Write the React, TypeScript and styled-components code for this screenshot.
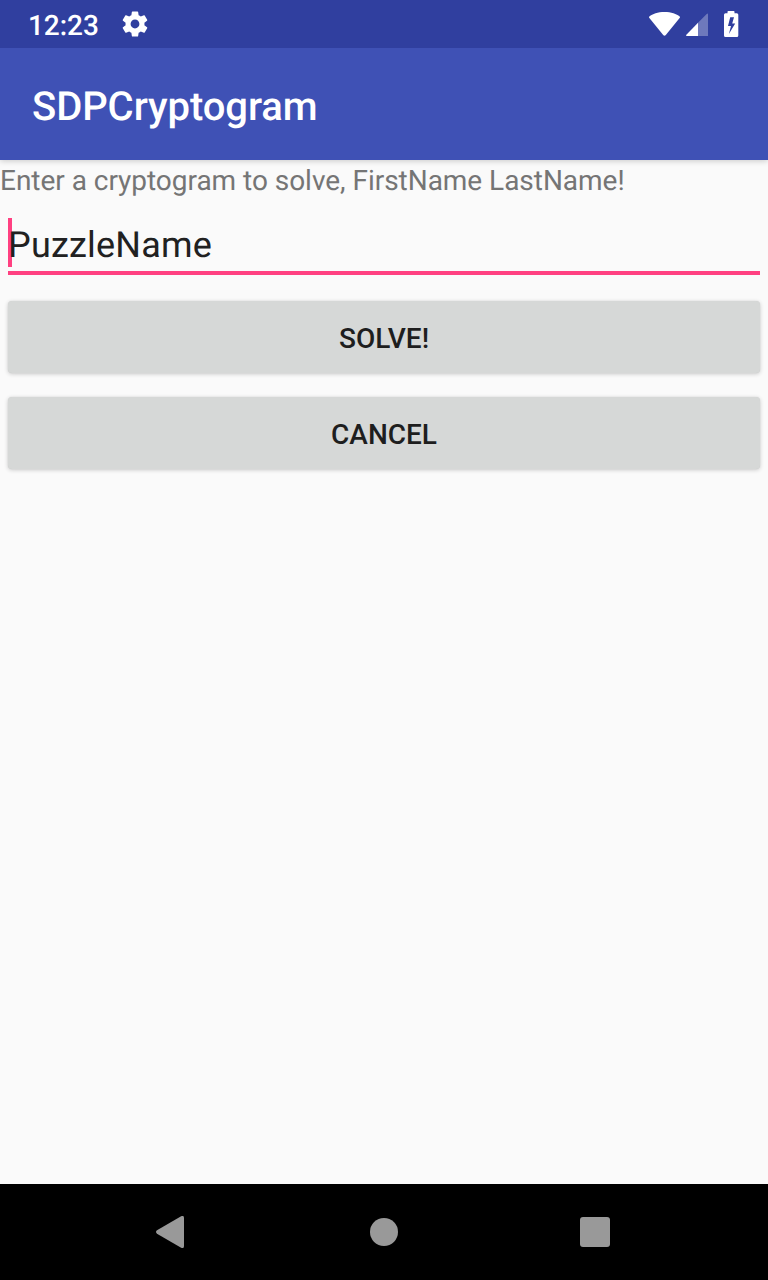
import React from "react";
import styled, { createGlobalStyle } from "styled-components";

const GlobalStyle = createGlobalStyle`
  * { box-sizing: border-box; }
  body {
    margin: 0;
    background: #fafafa;
    font-family: Roboto, sans-serif;
    text-rendering: geometricPrecision;
    -webkit-font-smoothing: antialiased;
  }
`;

const Screen = styled.div`
  display: flex;
  flex-direction: column;
  width: 768px;
  height: 1280px;
  overflow: hidden;
  background: #fafafa;
`;

const StatusBar = styled.header`
  display: flex;
  align-items: center;
  flex: none;
  z-index: 2;
  height: 48px;
  padding: 0 28px;
  background: #303f9f;
  color: #fff;
`;

const Clock = styled.span`
  width: 94px;
  padding-top: 4px;
  font-size: 28px;
  line-height: 34px;
  font-weight: 500;
  letter-spacing: -0.05px;
`;

const StatusIcons = styled.div`
  display: flex;
  margin-left: auto;
`;

const Icon = styled.svg`
  display: block;
  flex: none;
`;

const AppBar = styled.div`
  display: flex;
  align-items: center;
  flex: none;
  height: 112px;
  padding: 6px 32px 0;
  background: #3f51b5;
  box-shadow: 0 1px 6px rgba(0, 0, 0, 0.2);
  z-index: 1;
`;

const Title = styled.h1`
  margin: 0;
  color: #fff;
  font-size: 40px;
  line-height: 48px;
  font-weight: 500;
  letter-spacing: -0.08px;
`;

const Content = styled.main`
  display: flex;
  flex-direction: column;
  flex: 1;
`;

const Prompt = styled.p`
  margin: 0;
  height: 58px;
  padding-top: 2px;
  color: #757575;
  font-size: 28px;
  line-height: 38px;
  letter-spacing: -0.03px;
  white-space: nowrap;
`;

const Field = styled.div`
  position: relative;
  height: 57px;
  margin: 0 8px 26px;
  border-bottom: 4px solid #ff4081;
  color: #212121;
  font-size: 36px;
  line-height: 55px;
  letter-spacing: 0.2px;
`;

const Caret = styled.span`
  position: absolute;
  left: 0;
  top: 0;
  width: 4px;
  height: 49px;
  background: #ff4081;
`;

const FieldText = styled.span`
  position: relative;
`;

const Actions = styled.div`
  display: flex;
  flex-direction: column;
  gap: 24px;
  padding: 0 8px;
`;

const ActionButton = styled.button`
  height: 72px;
  padding: 3px 0 0;
  border: 0;
  border-radius: 4px;
  background: #d6d8d7;
  box-shadow: 0 1px 4px rgba(0, 0, 0, 0.2), 0 0 1px rgba(0, 0, 0, 0.12);
  color: #1e1e1e;
  font-family: inherit;
  font-size: 28px;
  line-height: 34px;
  font-weight: 500;
  text-transform: uppercase;
`;

const NavBar = styled.nav`
  display: grid;
  grid-template-columns: 214px 210px 30px;
  align-items: center;
  flex: none;
  height: 96px;
  padding-left: 156px;
  background: #000;
`;

export default function App() {
  return (
    <>
      <GlobalStyle />
      <Screen>
        <StatusBar>
          <Clock>12:23</Clock>
          <Icon width="26" height="26" viewBox="1.7 1.7 20.600 20.600" fill="#fff">
            <path d="M19.43 12.98c.04-.32.07-.64.07-.98s-.03-.66-.07-.98l2.11-1.65c.19-.15.24-.42.12-.64l-2-3.46c-.12-.22-.39-.3-.61-.22l-2.49 1c-.52-.4-1.08-.73-1.69-.98l-.38-2.65C14.46 2.18 14.25 2 14 2h-4c-.25 0-.46.18-.49.42l-.38 2.65c-.61.25-1.17.59-1.69.98l-2.49-1c-.23-.09-.49 0-.61.22l-2 3.46c-.13.22-.07.49.12.64l2.11 1.65c-.04.32-.07.65-.07.98s.03.66.07.98l-2.11 1.65c-.19.15-.24.42-.12.64l2 3.46c.12.22.39.3.61.22l2.49-1c.52.4 1.08.73 1.69.98l.38 2.65c.03.24.24.42.49.42h4c.25 0 .46-.18.49-.42l.38-2.65c.61-.25 1.17-.59 1.69-.98l2.49 1c.23.09.49 0 .61-.22l2-3.46c.12-.22.07-.49-.12-.64l-2.11-1.65zM12 15.5c-1.93 0-3.5-1.57-3.5-3.5s1.57-3.5 3.5-3.5 3.5 1.57 3.5 3.5-1.57 3.5-3.5 3.5z" />
          </Icon>
          <StatusIcons>
            <Icon width="92" height="28" viewBox="648 10 92 28" fill="#fff">
              <path d="M664.5 12C657.8 12 652.500 14 649.300 16.400Q648.700 17 649.200 17.700L663.200 35Q664.500 36.500 665.800 35L679.800 17.700Q680.300 17 679.700 16.400C676.500 14 671.200 12 664.500 12Z" />
              <path d="M698 22.800V36H708V14.600Q708 12.800 706.700 14.100Z" fillOpacity=".3" />
              <path d="M698 22.800V36H687Q685.200 36 686.400 34.700Z" />
              <path
                fillRule="evenodd"
                d="M727.500 13.300V11.800Q727.500 11 728.300 11H733.700Q734.500 11 734.500 11.800V13.300H736.800Q738.300 13.300 738.300 14.800V35.500Q738.300 37 736.800 37H725.500Q724 37 724 35.500V14.800Q724 13.300 725.500 13.300ZM734 17.200L730.200 17.200L728 26H731L728.900 34L735.200 23.500H732.200Z"
              />
            </Icon>
          </StatusIcons>
        </StatusBar>
        <AppBar>
          <Title>SDPCryptogram</Title>
        </AppBar>
        <Content>
          <Prompt>Enter a cryptogram to solve, FirstName LastName!</Prompt>
          <Field>
            <Caret />
            <FieldText>PuzzleName</FieldText>
          </Field>
          <Actions>
            <ActionButton>Solve!</ActionButton>
            <ActionButton>Cancel</ActionButton>
          </Actions>
        </Content>
        <NavBar>
          <Icon width="28" height="32" viewBox="0 0 28 32" fill="#999">
            <path d="M1 14.300L24.700.4Q28-1.200 28 2V30Q28 33.200 24.700 31.600L1 17.700Q-1 16 1 14.300Z" />
          </Icon>
          <Icon width="28" height="28" viewBox="0 0 28 28" fill="#999">
            <circle cx="14" cy="14" r="14" />
          </Icon>
          <Icon width="30" height="30" viewBox="0 0 30 30" fill="#999">
            <rect width="30" height="30" rx="3" />
          </Icon>
        </NavBar>
      </Screen>
    </>
  );
}
